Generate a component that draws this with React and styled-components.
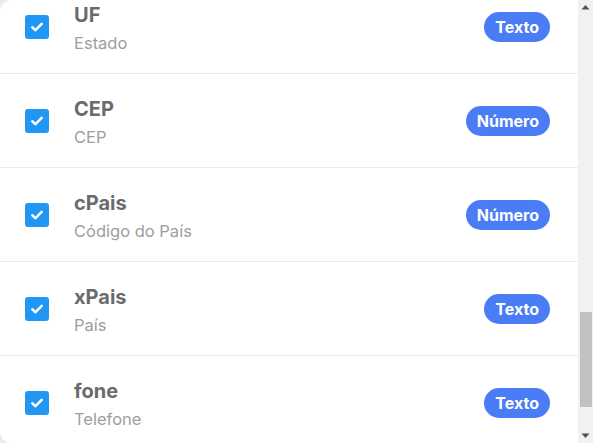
import React, { useEffect, useRef, useState } from "react";
import styled, { createGlobalStyle } from "styled-components";

const fields = [
  { name: "CNPJ", label: "CNPJ do Emitente", type: "Número" },
  { name: "CPF", label: "CPF do Emitente", type: "Número" },
  { name: "xNome", label: "Razão Social", type: "Texto" },
  { name: "xFant", label: "Nome Fantasia", type: "Texto" },
  { name: "IE", label: "Inscrição Estadual", type: "Texto" },
  { name: "IEST", label: "IE do Substituto Tributário", type: "Texto" },
  { name: "IM", label: "Inscrição Municipal", type: "Texto" },
  { name: "CRT", label: "Regime Tributário", type: "Número" },
  { name: "xLgr", label: "Logradouro", type: "Texto" },
  { name: "nro", label: "Número", type: "Texto" },
  { name: "xCpl", label: "Complemento", type: "Texto" },
  { name: "xBairro", label: "Bairro", type: "Texto" },
  { name: "cMun", label: "Código do Município", type: "Número" },
  { name: "xMun", label: "Município", type: "Texto" },
  { name: "UF", label: "Estado", type: "Texto" },
  { name: "CEP", label: "CEP", type: "Número" },
  { name: "cPais", label: "Código do País", type: "Número" },
  { name: "xPais", label: "País", type: "Texto" },
  { name: "fone", label: "Telefone", type: "Texto" },
  { name: "email", label: "E-mail", type: "Texto" },
];

const GlobalStyle = createGlobalStyle`
  html, body {
    margin: 0;
    padding: 0;
    background: #ececec;
    overflow: hidden;
  }
  body {
    font-family: "Inter", "Liberation Sans", sans-serif;
  }
`;

function Check() {
  return (
    <CheckBox>
      <svg width="16" height="16" viewBox="0 0 16 16">
        <path d="M3.3 8.3 L6.5 11.2 L12.7 4.9" fill="none" stroke="#fff" strokeWidth="2.5" strokeLinecap="round" strokeLinejoin="round" />
      </svg>
    </CheckBox>
  );
}

function Arrow({ down }) {
  return (
    <ArrowButton>
      <svg width="15" height="15" viewBox="0 0 15 15">
        <polygon points={down ? "3.5,5.5 11.5,5.5 7.5,10" : "3.5,9.5 11.5,9.5 7.5,5"} fill="#505050" />
      </svg>
    </ArrowButton>
  );
}

const TRACK = 443 - 30;

function App() {
  const listRef = useRef(null);
  const [thumb, setThumb] = useState({ top: 297, height: 94 });

  const update = () => {
    const el = listRef.current;
    if (!el) return;
    setThumb({
      top: (TRACK * el.scrollTop) / el.scrollHeight,
      height: (TRACK * el.clientHeight) / el.scrollHeight,
    });
  };

  useEffect(() => {
    if (listRef.current) listRef.current.scrollTop = 1398;
    update();
  }, []);

  return (
    <>
      <GlobalStyle />
      <Panel>
        <List ref={listRef} onScroll={update}>
          <Header>Campos do emitente</Header>
          {fields.map((f) => (
            <Row key={f.name}>
              <Check />
              <Info>
                <Title>{f.name}</Title>
                <Sub>{f.label}</Sub>
              </Info>
              <Badge>{f.type}</Badge>
            </Row>
          ))}
        </List>
        <ScrollBar>
          <Arrow />
          <Track>
            <Thumb style={{ top: thumb.top, height: thumb.height }} />
          </Track>
          <Arrow down />
        </ScrollBar>
      </Panel>
    </>
  );
}

const Panel = styled.div`
  width: 593px;
  height: 443px;
  display: flex;
  background: #fff;
  border-radius: 12px 0 0 12px;
  overflow: hidden;
`;

const List = styled.div`
  flex: 1;
  height: 100%;
  overflow-y: scroll;
  scrollbar-width: none;
  &::-webkit-scrollbar {
    display: none;
  }
`;

const ScrollBar = styled.div`
  width: 15px;
  flex-shrink: 0;
  display: flex;
  flex-direction: column;
  background: #f1f1f1;
`;

const ArrowButton = styled.div`
  height: 15px;
  display: flex;
  align-items: center;
  justify-content: center;
`;

const Track = styled.div`
  flex: 1;
  position: relative;
`;

const Thumb = styled.div`
  position: absolute;
  left: 2px;
  right: 1px;
  background: #c1c1c1;
`;

const Header = styled.div`
  height: 62px;
  display: flex;
  align-items: center;
  padding: 0 25px;
  font-size: 18px;
  font-weight: 700;
  color: #555;
  border-bottom: 1px solid #ebebeb;
  box-sizing: border-box;
`;

const Row = styled.div`
  height: 94px;
  box-sizing: border-box;
  display: flex;
  align-items: center;
  padding: 0 28px 0 25px;
  border-bottom: 1px solid #ebebeb;
`;

const CheckBox = styled.div`
  width: 24px;
  height: 24px;
  border-radius: 3px;
  background: #2196f3;
  display: flex;
  align-items: center;
  justify-content: center;
  flex-shrink: 0;
  margin-right: 25px;
`;

const Info = styled.div`
  flex: 1;
  display: flex;
  flex-direction: column;
  padding-top: 3px;
`;

const Title = styled.div`
  font-size: 20px;
  line-height: 24px;
  font-weight: 700;
  color: #6b6b6b;
`;

const Sub = styled.div`
  font-size: 16.5px;
  line-height: 20px;
  margin-top: 6px;
  color: #9e9e9e;
`;

const Badge = styled.span`
  height: 30px;
  padding: 0 11px;
  border-radius: 15px;
  background: #4a7cf5;
  color: #fff;
  font-size: 16px;
  font-weight: 700;
  display: inline-flex;
  align-items: center;
`;

export default App;
